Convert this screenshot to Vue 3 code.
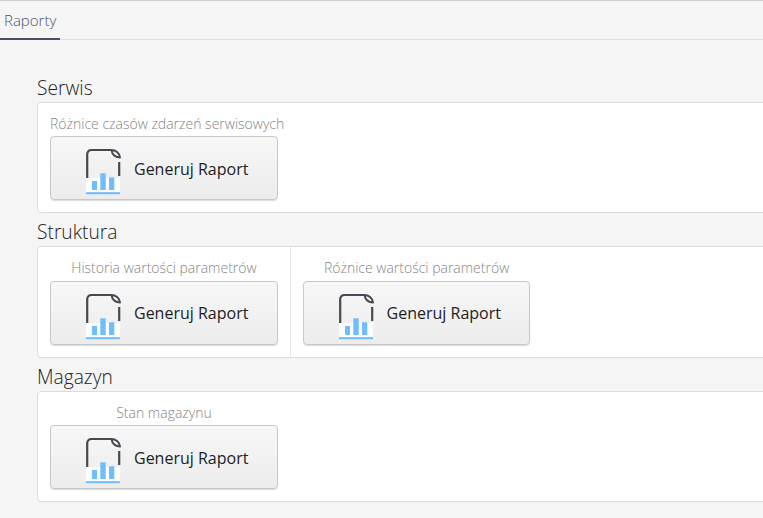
<script setup>
const sections = [
  { title: 'Serwis', items: ['Różnice czasów zdarzeń serwisowych'] },
  { title: 'Struktura', items: ['Historia wartości parametrów', 'Różnice wartości parametrów'] },
  { title: 'Magazyn', items: ['Stan magazynu'] },
]
</script>

<template>
  <div class="page">
    <div class="tabs">
      <div class="tab">Raporty</div>
    </div>
    <div class="content">
      <section v-for="s in sections" :key="s.title" class="section">
        <h2 class="title">{{ s.title }}</h2>
        <div class="card">
          <div v-for="item in s.items" :key="item" class="cell">
            <div class="label">{{ item }}</div>
            <button class="btn" type="button">
              <svg class="icon" width="36" height="56" viewBox="0 0 36 56" fill="none">
                <path d="M2.200 40V14a4 4 0 0 1 4-4H26" stroke="#454a52" stroke-width="2.200"/>
                <path d="M26.500 10c4 0 8 3 8.500 7.500c-4 0-8-2.500-8.500-7.500Z" stroke="#454a52" stroke-width="2" stroke-linejoin="round"/>
                <path d="M34.200 22v14" stroke="#454a52" stroke-width="2.200"/>
                <rect x="1" y="38" width="34" height="14" fill="#fff"/>
                <rect x="7" y="41" width="5" height="9" fill="#6fbcff"/>
                <rect x="15.300" y="33.300" width="5.400" height="16.700" fill="#6fbcff"/>
                <rect x="24" y="37.300" width="5.300" height="12.700" fill="#6fbcff"/>
                <rect x="1" y="52.200" width="34" height="2" fill="#6fbcff"/>
              </svg>
              <span class="btn-text">Generuj Raport</span>
            </button>
          </div>
        </div>
      </section>
    </div>
  </div>
</template>

<style>
html, body { margin: 0; background: #f5f5f5; overflow: hidden; }
</style>

<style scoped>
.page {
  width: 763px;
  height: 518px;
  overflow: hidden;
  background: #f5f5f5;
  border-top: 1px solid #cfcdcb;
  box-sizing: border-box;
  font-family: "Open Sans", sans-serif;
}
.tabs {
  height: 38px;
  border-bottom: 1px solid #dedede;
  box-sizing: content-box;
  display: flex;
}
.tab {
  width: 60px;
  height: 39px;
  box-sizing: border-box;
  padding: 9px 0 0 4px;
  font-size: 15px;
  font-weight: 300;
  line-height: 20px;
  color: #4f5270;
  border-bottom: 2px solid #4d4d6b;
}
.content {
  padding: 35.400px 0 0 37px;
  width: 800px;
}
.title {
  margin: 0;
  font-size: 19.200px;
  font-weight: 300;
  line-height: 25px;
  height: 26.500px;
  color: #222;
}
.section:nth-child(2) .title {
  line-height: 24.200px;
}
.card {
  display: flex;
  background: #fff;
  border: 1px solid #dcdcdc;
  border-radius: 4px;
  height: 111.200px;
  box-sizing: border-box;
  margin-bottom: 6.800px;
}
.cell {
  width: 228px;
  padding: 10px 12px 0 12px;
  box-sizing: content-box;
}
.cell + .cell {
  border-left: 1px solid #e6e6e6;
  padding-left: 11.600px;
}
.label {
  width: 228px;
  height: 23.500px;
  text-align: center;
  white-space: nowrap;
  font-size: 14px;
  font-weight: 300;
  line-height: 22px;
  color: #858585;
}
.btn {
  display: flex;
  align-items: center;
  width: 227.500px;
  height: 64px;
  margin: 0;
  padding: 0 0 0 34px;
  box-sizing: border-box;
  border: 1px solid #c8c8c8;
  border-radius: 4px;
  background: linear-gradient(#f7f7f7, #ececec);
  box-shadow: 0 1px 1px rgba(0,0,0,.15);
  font-family: inherit;
}
.icon { flex: none; }
.btn-text {
  margin-left: 13px;
  padding-top: 0.400px;
  font-size: 16px;
  color: #222;
  white-space: nowrap;
}
</style>
